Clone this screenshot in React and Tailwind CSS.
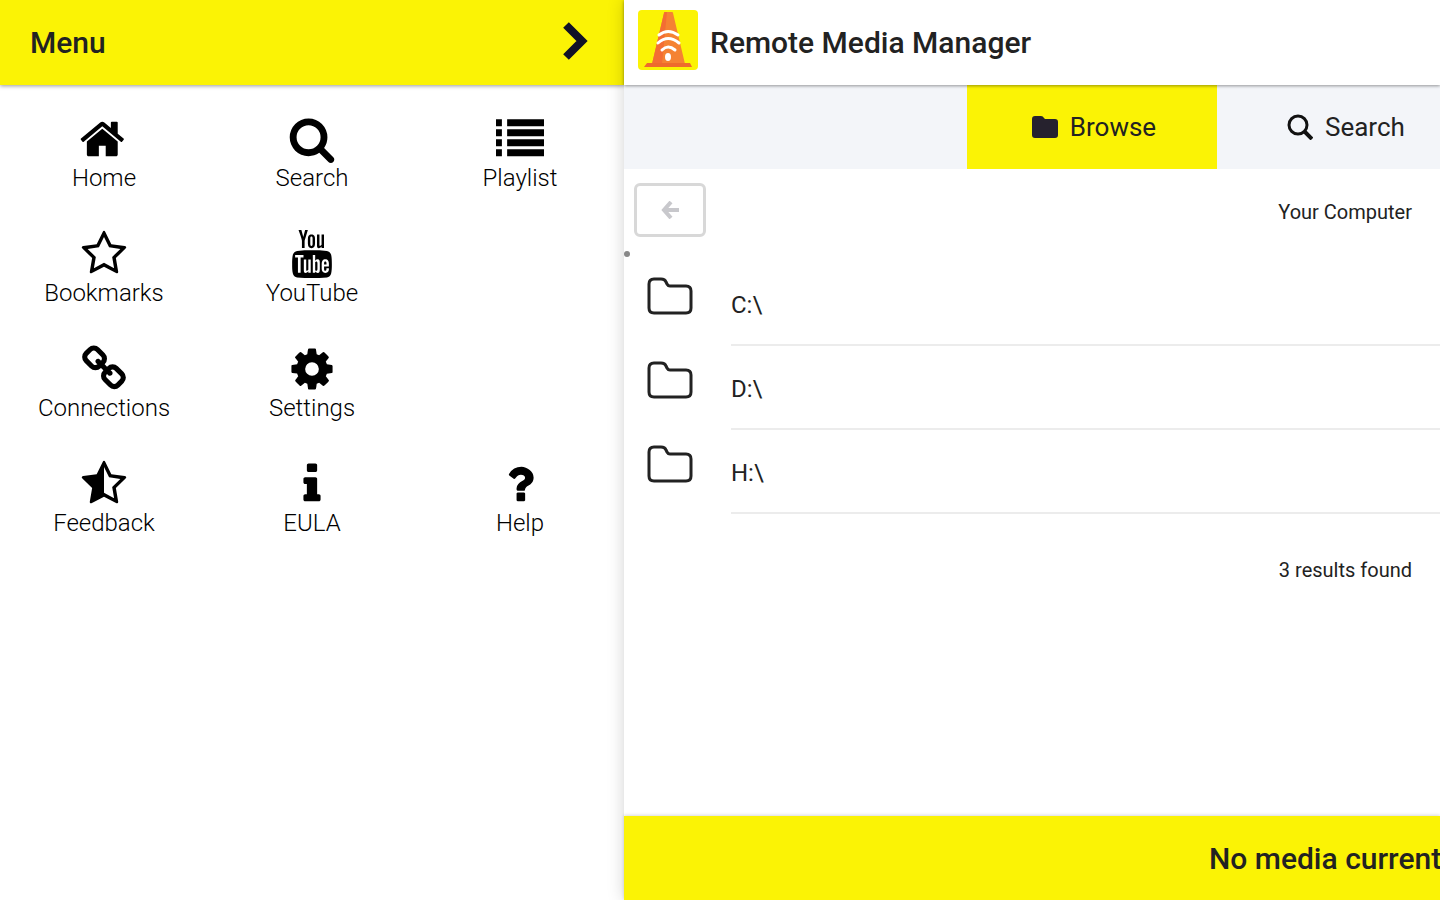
import React, { useState } from "react";
import { TfiYoutube } from "react-icons/tfi";

// Font glyph drawn on the 1792 grid
function Glyph({ d }) {
  return (
    <svg viewBox="0 0 1792 1792" className="h-12 w-12" fill="currentColor" aria-hidden="true">
      <path d={d} />
    </svg>
  );
}

const HOME =
  "M1408 992v480q0 26-19 45t-45 19h-384v-384h-256v384h-384q-26 0-45-19t-19-45v-480q0-1 .5-3t.5-3l575-474 575 474q1 2 1 6zm223-69l-62 74q-8 9-21 11h-3q-13 0-21-7l-692-577-692 577q-12 8-24 7-13-2-21-11l-62-74q-8-10-7-23.5t11-21.5l719-599q32-26 76-26t76 26l244 204v-195q0-14 9-23t23-9h192q14 0 23 9t9 23v408l219 182q10 8 11 21.5t-7 23.5z";
const SEARCH =
  "M1216 832q0-185-131.5-316.5t-316.5-131.5-316.5 131.5-131.5 316.5 131.5 316.5 316.5 131.5 316.5-131.5 131.5-316.5zm512 832q0 52-38 90t-90 38q-54 0-90-38l-343-342q-179 124-399 124-143 0-273.5-55.5t-225-150-150-225-55.5-273.5 55.5-273.5 150-225 225-150 273.5-55.5 273.5 55.5 225 150 150 225 55.5 273.5q0 220-124 399l343 343q37 37 37 90z";
const LIST =
  "M0 160h220v256h-220zM416 160h1376v256h-1376zM0 533h220v256h-220zM416 533h1376v256h-1376zM0 907h220v256h-220zM416 907h1376v256h-1376zM0 1280h220v256h-220zM416 1280h1376v256h-1376z";
const STAR =
  "M1201 1004l306-297-422-62-189-382-189 382-422 62 306 297-73 421 378-199 377 199zm527-357q0 22-26 48l-363 354 86 500q1 7 1 20 0 50-41 50-19 0-40-12l-449-236-449 236q-22 12-40 12-21 0-31.5-14.5t-10.5-35.5q0-6 2-20l86-500-364-354q-25-27-25-48 0-37 56-46l502-73 225-455q19-41 49-41t49 41l225 455 502 73q56 9 56 46z";
const STAR_HALF = STAR + "M896 263L707 645L285 707L591 1004L518 1425L896 1226z";
const LINK =
  "M1520 1216q0-40-28-68l-208-208q-28-28-68-28-42 0-72 32 3 3 19 18.5t21.5 21.5 15 19 13 25.5 3.5 27.5q0 40-28 68t-68 28q-15 0-27.5-3.5t-25.5-13-19-15-21.5-21.5-18.5-19q-33 31-33 73 0 40 28 68l206 207q27 27 68 27 40 0 68-26l147-146q28-28 28-67zm-703-705q0-40-28-68l-206-207q-28-28-68-28-39 0-68 27l-147 146q-28 28-28 67 0 40 28 68l208 208q27 27 68 27 42 0 72-31-3-3-19-18.5t-21.5-21.5-15-19-13-25.5-3.5-27.5q0-40 28-68t68-28q15 0 27.5 3.5t25.5 13 19 15 21.5 21.5 18.5 19q33-31 33-73zm895 705q0 120-85 203l-147 146q-83 83-203 83-121 0-204-85l-206-207q-83-83-83-203 0-123 88-209l-88-88q-86 88-208 88-120 0-204-84l-208-208q-84-84-84-204t85-203l147-146q83-83 203-83 121 0 204 85l206 207q83 83 83 203 0 123-88 209l88 88q86-88 208-88 120 0 204 84l208 208q84 84 84 204z";
const COG =
  "M1152 896q0-106-75-181t-181-75-181 75-75 181 75 181 181 75 181-75 75-181zm512-109v222q0 12-8 23t-20 13l-185 28q-19 54-39 91 35 50 107 138 10 12 10 25t-9 23q-27 37-99 108t-94 71q-12 0-26-9l-138-108q-44 23-91 38-16 136-29 186-7 28-36 28h-222q-14 0-24.5-8.5t-11.5-21.5l-28-184q-49-16-90-37l-141 107q-10 9-25 9-14 0-25-11-126-114-165-168-7-10-7-23 0-12 8-23 15-21 51-66.5t54-70.5q-27-50-41-99l-183-27q-13-2-21-12.5t-8-23.5v-222q0-12 8-23t19-13l186-28q14-46 39-92-40-57-107-138-10-12-10-24 0-10 9-23 26-36 98.5-107.5t94.5-71.5q13 0 26 10l138 107q44-23 91-38 16-136 29-186 7-28 36-28h222q14 0 24.5 8.5t11.5 21.5l28 184q49 16 90 37l142-107q9-9 24-9 13 0 25 10 129 119 165 170 7 8 7 22 0 12-8 23-15 21-51 66.5t-54 70.5q26 50 41 98l183 28q13 2 21 12.5t8 23.5z";
const INFO =
  "M1216 1344v128q0 26-19 45t-45 19h-512q-26 0-45-19t-19-45v-128q0-26 19-45t45-19h64v-384h-64q-26 0-45-19t-19-45v-128q0-26 19-45t45-19h384q26 0 45 19t19 45v576h64q26 0 45 19t19 45zm-128-1152v192q0 26-19 45t-45 19h-256q-26 0-45-19t-19-45v-192q0-26 19-45t45-19h256q26 0 45 19t19 45z";
const QUESTION =
  "M1088 1256v240q0 16-12 28t-28 12h-240q-16 0-28-12t-12-28v-240q0-16 12-28t28-12h240q16 0 28 12t12 28zm316-600q0 54-15.5 101t-35 76.5-55 59.5-57.5 43.5-61 35.5q-41 23-68.5 65t-27.5 67q0 17-12 32.5t-28 15.5h-240q-15 0-25.5-18.5t-10.5-37.5v-45q0-83 65-156.5t143-108.5q59-27 84-56t25-76q0-42-46.5-74t-107.5-32q-65 0-108 29-35 25-107 115-13 16-31 16-12 0-25-8l-164-125q-13-10-15.5-25t5.5-28q160-266 464-266 80 0 161 31t146 83 106 127.5 41 158.5z";

// Rows of the menu, null leaves the cell empty
const menuItems = [
  { label: "Home", icon: <Glyph d={HOME} /> },
  { label: "Search", icon: <Glyph d={SEARCH} /> },
  { label: "Playlist", icon: <Glyph d={LIST} /> },
  { label: "Bookmarks", icon: <Glyph d={STAR} /> },
  { label: "YouTube", icon: <TfiYoutube className="h-12 w-12" aria-hidden="true" /> },
  null,
  { label: "Connections", icon: <Glyph d={LINK} /> },
  { label: "Settings", icon: <Glyph d={COG} /> },
  null,
  { label: "Feedback", icon: <Glyph d={STAR_HALF} /> },
  { label: "EULA", icon: <Glyph d={INFO} /> },
  { label: "Help", icon: <Glyph d={QUESTION} /> },
];

const drives = ["C:\\", "D:\\", "H:\\"];

function ConeLogo() {
  return (
    <svg viewBox="0 0 60 60" className="h-[60px] w-[60px] shrink-0" aria-hidden="true">
      <rect width="60" height="60" rx="4" fill="#fbf305" />
      <path d="M26 3q0-1 1-1h7q1 0 1 1l12 51H14z" fill="#f58232" />
      <path d="M26 3q0-1 1-1h2l-5 52H14z" fill="#f36d33" />
      <path d="M9 53h43l2 4H6z" fill="#ee6a2c" />
      <g fill="none" stroke="#fff" strokeWidth="3" strokeLinecap="round">
        <path d="M21 25q9-7 19 0" />
        <path d="M20 33q10-9 21 0" />
        <path d="M24 40q6-6 13 0" />
      </g>
      <ellipse cx="30" cy="47" rx="3" ry="4" fill="#fff" />
    </svg>
  );
}

function FolderOutline() {
  return (
    <svg viewBox="0 0 46 38" className="h-[38px] w-[46px]" fill="none" stroke="#222" strokeWidth="3" strokeLinejoin="round" aria-hidden="true">
      <path d="M2 7q0-5 5-5h7q4 0 5 3l1 2q1 2 3 2h16q5 0 5 5v17q0 5-5 5H7q-5 0-5-5z" />
    </svg>
  );
}

function SideMenu({ onClose }) {
  return (
    <aside className="flex w-[624px] shrink-0 flex-col">
      <header className="flex h-[85px] items-center justify-between bg-[#fbf305] pr-9 pb-1 pl-[30px] shadow-[0_1px_4px_rgba(0,0,0,0.4)]">
        <h2 className="pt-1 text-3xl font-medium">Menu</h2>
        <button type="button" aria-label="Close menu" onClick={onClose}>
          <svg viewBox="0 0 26 38" className="h-[38px] w-[26px]" fill="none" stroke="#111126" strokeWidth="8" aria-hidden="true">
            <path d="M4 3l16 16-16 16" />
          </svg>
        </button>
      </header>
      <nav className="grid grid-cols-3 pt-[30px]">
        {menuItems.map((item, i) =>
          item ? (
            <a key={item.label} href="#" className="flex h-[115px] flex-col items-center text-black">
              {item.icon}
              <span className="text-2xl leading-[30px] font-light">{item.label}</span>
            </a>
          ) : (
            <span key={i} />
          )
        )}
      </nav>
    </aside>
  );
}

export default function App() {
  const [tab, setTab] = useState("browse");
  const [menuOpen, setMenuOpen] = useState(true);

  return (
    <div className="flex h-screen overflow-hidden bg-white font-['Roboto',sans-serif] text-[#222]">
      {menuOpen && <SideMenu onClose={() => setMenuOpen(false)} />}

      <div className="relative flex min-w-0 flex-1 flex-col bg-white shadow-[0_0_16px_rgba(0,0,0,0.18)]">
        {/* Header */}
        <header className="relative flex h-[85px] shrink-0 items-center gap-3 px-3.5 pb-1.5 shadow-[0_1px_3px_rgba(0,0,0,0.4)]">
          <ConeLogo />
          <h1 className="pt-1.5 text-3xl font-medium whitespace-nowrap">Remote Media Manager</h1>
        </header>

        {/* Tabs */}
        <div role="tablist" className="flex h-[84px] shrink-0 justify-end bg-[#f3f5f9] text-[26px]">
          <button
            type="button"
            role="tab"
            aria-selected={tab === "browse"}
            onClick={() => setTab("browse")}
            className={`flex w-[250px] items-center justify-center gap-3 pl-1 ${tab === "browse" ? "bg-[#fbf305]" : ""}`}
          >
            <svg viewBox="0 0 26 22" className="h-[22px] w-[26px]" fill="#26222e" aria-hidden="true">
              <path d="M0 3q0-3 3-3h6q2 0 3 2l1 1h10q3 0 3 3v13q0 3-3 3H3q-3 0-3-3z" />
            </svg>
            Browse
          </button>
          <button
            type="button"
            role="tab"
            aria-selected={tab === "search"}
            onClick={() => setTab("search")}
            className={`flex w-[223px] items-center gap-3 pl-[70px] ${tab === "search" ? "bg-[#fbf305]" : ""}`}
          >
            <svg viewBox="0 0 26 26" className="h-[26px] w-[26px]" fill="none" stroke="#111" aria-hidden="true">
              <circle cx="11" cy="11" r="9" strokeWidth="3" />
              <path d="M17 17l8 8" strokeWidth="4" />
            </svg>
            Search
          </button>
        </div>

        {/* Folder listing */}
        <main className="flex-1">
          <div className="flex items-center justify-between pt-3.5 pr-7 pl-2.5">
            <button type="button" disabled aria-label="Back" className="flex h-[54px] w-[72px] items-center justify-center rounded-md border-3 border-[#d8d8d8]">
              <svg viewBox="0 0 18 18" className="h-[18px] w-[18px]" fill="none" stroke="#c8c8cc" strokeWidth="4" aria-hidden="true">
                <path d="M18 9H4M10 1L3 9l7 8" />
              </svg>
            </button>
            <p className="pt-1 text-xl">Your Computer</p>
          </div>
          <div className="flex h-[25px] items-center pt-2">
            <span className="h-1.5 w-1.5 rounded-sm bg-[#888]" />
          </div>
          <ul>
            {drives.map((drive) => (
              <li key={drive}>
                <a href="#" className="flex pl-[23px]">
                  <span className="w-[84px] pt-[15px]">
                    <FolderOutline />
                  </span>
                  <span className="flex h-[84px] flex-1 items-center border-b-2 border-[#ececec] pt-1 text-2xl">{drive}</span>
                </a>
              </li>
            ))}
          </ul>
          <p className="pt-[42px] pr-7 text-right text-xl">3 results found</p>
        </main>

        {/* Player bar */}
        <footer className="flex h-[84px] shrink-0 items-center justify-end bg-[#fbf305] shadow-[0_-1px_3px_rgba(0,0,0,0.15)]">
          <p className="w-[231px] overflow-hidden pt-0.5 text-3xl font-medium whitespace-nowrap">No media current</p>
        </footer>
      </div>
    </div>
  );
}
